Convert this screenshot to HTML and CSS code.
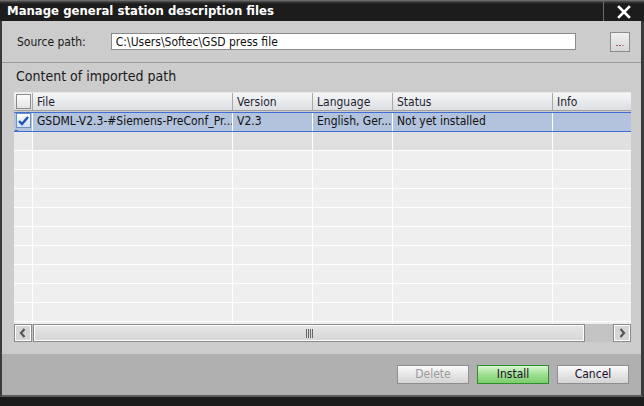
FILE: index.html
```html
<!DOCTYPE html>
<html lang="en">
<head>
    <meta charset="UTF-8">
    <title>Manage general station description files</title>
    <link rel="stylesheet" href="styles.css">
</head>
<body>
    <div class="window">
        <div class="titlebar">
            <span class="title">Manage general station description files</span>
            <button class="close" title="Close">
                <svg width="14" height="14" viewBox="0 0 14 14"><path d="M2 2 L12 12 M12 2 L2 12" stroke="#fff" stroke-width="2.6" stroke-linecap="square"/></svg>
            </button>
        </div>

        <div class="content">
            <div class="source">
                <label for="path">Source path:</label>
                <input type="text" id="path" value="C:\Users\Softec\GSD press file">
                <button class="browse">
                    <span class="dot red"></span><span class="dot blue"></span><span class="dot orange"></span>
                </button>
            </div>

            <h2>Content of imported path</h2>

            <div class="table">
                <div class="row head">
                    <div class="cell check"><span class="box"></span></div>
                    <div class="cell">File</div>
                    <div class="cell">Version</div>
                    <div class="cell">Language</div>
                    <div class="cell">Status</div>
                    <div class="cell">Info</div>
                </div>
                <div class="body">
                    <div class="row selected">
                        <div class="cell check">
                            <span class="box checked">
                                <svg width="13" height="12" viewBox="0 0 13 12"><path d="M2 6 L5 9 L11 2" fill="none" stroke="#1d4fb8" stroke-width="2.4"/></svg>
                            </span>
                            <span class="focus"></span>
                        </div>
                        <div class="cell">GSDML-V2.3-#Siemens-PreConf_Pr...</div>
                        <div class="cell">V2.3</div>
                        <div class="cell">English, Ger...</div>
                        <div class="cell">Not yet installed</div>
                        <div class="cell"></div>
                    </div>
                    <div class="row hover">
                        <div class="cell check"></div><div class="cell"></div><div class="cell"></div><div class="cell"></div><div class="cell"></div><div class="cell"></div>
                    </div>
                    <div class="row"><div class="cell check"></div><div class="cell"></div><div class="cell"></div><div class="cell"></div><div class="cell"></div><div class="cell"></div></div>
                    <div class="row"><div class="cell check"></div><div class="cell"></div><div class="cell"></div><div class="cell"></div><div class="cell"></div><div class="cell"></div></div>
                    <div class="row"><div class="cell check"></div><div class="cell"></div><div class="cell"></div><div class="cell"></div><div class="cell"></div><div class="cell"></div></div>
                    <div class="row"><div class="cell check"></div><div class="cell"></div><div class="cell"></div><div class="cell"></div><div class="cell"></div><div class="cell"></div></div>
                    <div class="row"><div class="cell check"></div><div class="cell"></div><div class="cell"></div><div class="cell"></div><div class="cell"></div><div class="cell"></div></div>
                    <div class="row"><div class="cell check"></div><div class="cell"></div><div class="cell"></div><div class="cell"></div><div class="cell"></div><div class="cell"></div></div>
                    <div class="row"><div class="cell check"></div><div class="cell"></div><div class="cell"></div><div class="cell"></div><div class="cell"></div><div class="cell"></div></div>
                    <div class="row"><div class="cell check"></div><div class="cell"></div><div class="cell"></div><div class="cell"></div><div class="cell"></div><div class="cell"></div></div>
                    <div class="row"><div class="cell check"></div><div class="cell"></div><div class="cell"></div><div class="cell"></div><div class="cell"></div><div class="cell"></div></div>
                    <div class="row"><div class="cell check"></div><div class="cell"></div><div class="cell"></div><div class="cell"></div><div class="cell"></div><div class="cell"></div></div>
                </div>
            </div>

            <div class="hscroll">
                <button class="arrow">
                    <svg width="8" height="10" viewBox="0 0 8 10"><path d="M5.5 1 L2 5 L5.5 9" fill="none" stroke="#555" stroke-width="2.2"/></svg>
                </button>
                <div class="thumb">
                    <svg width="8" height="9" viewBox="0 0 8 9"><path d="M0.5 0 V9 M2.5 0 V9 M4.5 0 V9 M6.5 0 V9" stroke="#666" stroke-width="1"/></svg>
                </div>
                <div class="track"></div>
                <button class="arrow">
                    <svg width="8" height="10" viewBox="0 0 8 10"><path d="M2.5 1 L6 5 L2.5 9" fill="none" stroke="#555" stroke-width="2.2"/></svg>
                </button>
            </div>
        </div>

        <div class="footer">
            <button class="btn" disabled>Delete</button>
            <button class="btn install">Install</button>
            <button class="btn">Cancel</button>
        </div>
    </div>
</body>
</html>
```

FILE: styles.css
```css
* {
    margin: 0;
    padding: 0;
    box-sizing: border-box;
}

body {
    background: #1c1c1c;
    font-family: "DejaVu Sans Condensed", "DejaVu Sans", sans-serif;
    font-size: 12px;
    color: #1a1a1a;
}

.window {
    width: 644px;
    height: 406px;
    display: flex;
    flex-direction: column;
    background: #1c1c1c;
}

/* title bar */
.titlebar {
    height: 21px;
    display: flex;
    align-items: stretch;
    background: linear-gradient(#7a7a7a 0, #3a3a3a 2px, #1c1c1c 4px, #1c1c1c);
}

.title {
    flex: 1;
    padding: 3px 0 0 7px;
    color: #fff;
    font-weight: bold;
    font-size: 13px;
}

.close {
    width: 41px;
    border: none;
    border-left: 1px solid #6a6a6a;
    background: transparent;
    display: flex;
    align-items: center;
    justify-content: center;
    padding-top: 2px;
}

/* main panel */
.content {
    height: 333px;
    background: #cccccc;
    border-left: 2px solid #3a3a3a;
    border-right: 3px solid #3a3a3a;
    padding: 0 11px 0 12px;
}

.source {
    height: 42px;
    display: flex;
    align-items: center;
    border-bottom: 1px solid #9a9a9a;
    margin: 0 -11px 0 -12px;
    padding: 0 11px 0 15px;
}

.source label {
    width: 94px;
    color: #1a1a1a;
}

.source input {
    width: 466px;
    height: 17px;
    border: 1px solid #8a8a8a;
    background: #fff;
    padding: 0 4px;
    font: inherit;
    color: #111;
    outline: none;
}

.browse {
    width: 20px;
    height: 20px;
    margin-left: 34px;
    border: 1px solid #8c8c8c;
    background: linear-gradient(#f0f0f0, #d6d6d6);
    display: flex;
    align-items: flex-end;
    justify-content: center;
    gap: 1px;
    padding-bottom: 5px;
}

.dot {
    width: 2px;
    height: 1px;
}

.dot.red { background: #d04848; }
.dot.blue { background: #3c64d0; }
.dot.orange { background: #d89a30; }

h2 {
    font-size: 14px;
    font-weight: normal;
    padding: 5px 0 0 2px;
    height: 29px;
}

/* grid table */
.table {
    width: 617px;
}

.row {
    display: grid;
    grid-template-columns: 19px 200px 80px 80px 160px 78px;
    height: 19px;
    background: #efefef;
    border-bottom: 1px solid #fff;
}

.cell {
    border-right: 1px solid #fff;
    padding-left: 4px;
    line-height: 18px;
    white-space: nowrap;
    overflow: hidden;
}

.cell:last-child {
    border-right: none;
}

.cell.check {
    padding: 0;
    position: relative;
}

.head {
    background: linear-gradient(#f5f6f8, #e7e9ec 55%, #dcdfe3);
    border-bottom: 1px solid #a0a0a0;
    border-top: 1px solid #e8e8e8;
}

.head .cell {
    border-right-color: #a8a8a8;
    color: #1e1e30;
}

.body {
    height: 213px;
    overflow: hidden;
}

.row.selected {
    height: 20px;
    background: #b4c3dd;
    border-top: 1px solid #3f6fd0;
    border-bottom: 1px solid #3f6fd0;
    margin-top: 1px;
}

.row.selected .cell {
    line-height: 17px;
    color: #111;
}

.row.hover {
    background: #e0e0e0;
}

.row.hover .check {
    background: #e9e9e9;
}

.box {
    position: absolute;
    left: 2px;
    top: 1px;
    width: 15px;
    height: 15px;
    border: 1px solid #8a8a8a;
    background: linear-gradient(#fdfdfd, #e4e4e4);
    display: flex;
    align-items: center;
    justify-content: center;
}

.box.checked {
    top: 0;
    border-color: #6f8fb8;
    background: linear-gradient(#ffffff, #cfe0f6);
}

.focus {
    position: absolute;
    left: 1px;
    bottom: -2px;
    width: 3px;
    height: 3px;
    background: #3f6fd0;
}

/* horizontal scrollbar */
.hscroll {
    width: 617px;
    height: 18px;
    display: flex;
    background: #c3c3c3;
}

.arrow {
    width: 18px;
    height: 18px;
    border: 1px solid #8a8a8a;
    box-shadow: inset 0 0 0 1px #fff;
    background: #d6d6d6;
    display: flex;
    align-items: center;
    justify-content: center;
}

.thumb {
    width: 552px;
    margin-left: 1px;
    border: 1px solid #8a8a8a;
    box-shadow: inset 0 0 0 1px #fff;
    background: linear-gradient(#e6e6e6, #d6d6d6);
    display: flex;
    align-items: center;
    justify-content: center;
    padding-left: 2px;
}

.track {
    flex: 1;
}

/* footer buttons */
.footer {
    height: 43px;
    background: #b0b0b0;
    border-left: 2px solid #3a3a3a;
    border-right: 3px solid #3a3a3a;
    border-bottom: 2px solid #5a5a5a;
    display: flex;
    justify-content: flex-end;
    align-items: center;
    gap: 8px;
    padding: 0 12px 1px 0;
}

.btn {
    width: 72px;
    height: 19px;
    border: 1px solid #8e8e8e;
    background: linear-gradient(#fafafa, #e6e6e6 50%, #d4d4d4);
    font: inherit;
    color: #1a0f2a;
    cursor: pointer;
}

.btn:disabled {
    color: #9a9a9a;
    cursor: default;
}

.btn.install {
    border-color: #2f8f2f;
    background: linear-gradient(#d8f4d0, #9ee090 50%, #7ccc6c);
}
```
